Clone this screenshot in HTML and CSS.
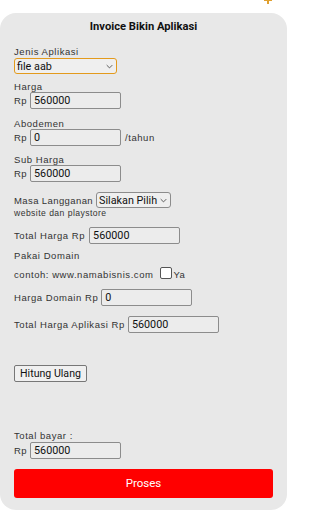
FILE: index.html
```html
<!DOCTYPE html>
<html>
<head>
<meta charset="utf-8">
<link rel="stylesheet" href="styles.css">
</head>
<body>
<div class="corner-icon"></div>
<div class="card">
  <h1 class="title">Invoice Bikin Aplikasi</h1>

  <div class="group g-jenis">
    <div class="label">Jenis Aplikasi</div>
    <div class="select focused sel-jenis"><span>file aab</span><svg class="chev" viewBox="0 0 10 6"><path d="M1 1l4 4 4-4" fill="none" stroke="#444" stroke-width="1.2"/></svg></div>
  </div>

  <div class="group g-harga">
    <div class="label">Harga</div>
    <div class="row"><span class="rp">Rp</span><div class="input">560000</div></div>
  </div>

  <div class="group g-abo">
    <div class="label">Abodemen</div>
    <div class="row"><span class="rp">Rp</span><div class="input">0</div><span class="unit">/tahun</span></div>
  </div>

  <div class="group g-sub">
    <div class="label">Sub Harga</div>
    <div class="row"><span class="rp">Rp</span><div class="input">560000</div></div>
  </div>

  <div class="group g-masa">
    <div class="row"><span class="label label-masa">Masa Langganan</span><div class="select sel-masa"><span>Silakan Pilih</span><svg class="chev" viewBox="0 0 10 6"><path d="M1 1l4 4 4-4" fill="none" stroke="#444" stroke-width="1.2"/></svg></div></div>
    <div class="note">website dan playstore</div>
  </div>

  <div class="group g-total">
    <div class="row"><span class="label">Total Harga Rp</span><div class="input">560000</div></div>
  </div>

  <div class="group g-domain">
    <div class="label">Pakai Domain</div>
    <div class="row row-check"><span class="label">contoh: www.namabisnis.com</span><span class="checkbox"></span><span class="label ya">Ya</span></div>
  </div>

  <div class="group g-hdomain">
    <div class="row"><span class="label">Harga Domain Rp</span><div class="input">0</div></div>
  </div>

  <div class="group g-tapl">
    <div class="row"><span class="label">Total Harga Aplikasi Rp</span><div class="input">560000</div></div>
  </div>

  <div class="group g-btn">
    <div class="btn">Hitung Ulang</div>
  </div>

  <div class="group g-bayar">
    <div class="label">Total bayar :</div>
    <div class="row"><span class="rp">Rp</span><div class="input">560000</div></div>
  </div>

  <div class="proses">Proses</div>
</div>
</body>
</html>
```
FILE: styles.css
```css
* { box-sizing: border-box; }
html, body { margin: 0; padding: 0; background: #ffffff; }
body {
  width: 288px;
  height: 512px;
  overflow: hidden;
  font-family: "Liberation Sans", Arial, sans-serif;
  color: #222;
  position: relative;
}
.corner-icon {
  position: absolute;
  right: 16px;
  top: -5px;
  width: 8px;
  height: 9px;
}
.corner-icon::before, .corner-icon::after {
  content: "";
  position: absolute;
  background: #e0a030;
}
.corner-icon::before { left: 3px; top: 0; width: 2px; height: 9px; }
.corner-icon::after { left: 0; top: 4px; width: 8px; height: 2px; }
.card {
  margin: 13px 1px 0 0;
  height: 497px;
  background: #e8e8e8;
  border-radius: 16px;
  padding: 7px 14px 0 14px;
}
.title {
  margin: 0;
  text-align: center;
  font-family: Roboto, "Noto Sans", sans-serif;
  font-weight: bold;
  font-size: 11.2px;
  line-height: 14px;
  color: #111;
}
.label {
  display: block;
  font-family: "Liberation Sans", Arial, sans-serif;
  font-size: 9.5px;
  letter-spacing: 0.55px;
  line-height: 11px;
  color: #333;
  white-space: nowrap;
}
.label-masa { letter-spacing: 0.4px; }
.row { display: flex; align-items: center; }
.rp {
  font-family: "Liberation Sans", Arial, sans-serif;
  font-size: 9.5px;
  letter-spacing: 0.4px;
  color: #333;
  width: 16px;
}
.input {
  width: 91px;
  height: 17px;
  border: 1px solid #8c8c8c;
  border-radius: 2px;
  background: #ececec;
  font-family: Roboto, sans-serif;
  font-size: 10.8px;
  line-height: 15px;
  padding-left: 3px;
  color: #111;
}
.unit {
  font-family: "Liberation Sans", Arial, sans-serif;
  font-size: 9.5px;
  letter-spacing: 0.55px;
  color: #333;
  margin-left: 4px;
}
.select {
  display: flex;
  align-items: center;
  justify-content: space-between;
  height: 16px;
  border: 1px solid #8c8c8c;
  border-radius: 3px;
  background: #efefef;
  font-family: Roboto, sans-serif;
  font-size: 10.8px;
  padding: 0 3px 0 2px;
  color: #111;
  white-space: nowrap;
}
.select.focused { border: 1.5px solid #e39a1c; }
.chev { width: 7px; height: 5px; flex: none; }
.g-jenis { margin-top: 12px; }
.sel-jenis { width: 103px; margin-top: 1px; }
.g-harga { margin-top: 7px; }
.g-abo { margin-top: 9px; }
.g-sub { margin-top: 8px; }
.g-masa { margin-top: 10px; }
.sel-masa { width: 75px; margin-left: 3px; }
.sel-masa .chev { margin-left: 2px; }
.note {
  font-family: "Liberation Sans", Arial, sans-serif;
  font-size: 8.6px;
  letter-spacing: 0.45px;
  color: #333;
  line-height: 10px;
}
.g-total { margin-top: 9px; }
.g-total .input { margin-left: 4px; }
.g-domain { margin-top: 6px; }
.row-check { margin-top: 7px; height: 12px; }
.checkbox {
  width: 12px;
  height: 12px;
  border: 1px solid #555;
  border-radius: 2px;
  background: #fff;
  margin-left: 7px;
  margin-top: -2px;
}
.ya { margin-left: 1px; }
.g-hdomain { margin-top: 9px; }
.g-hdomain .input { margin-left: 3px; }
.g-tapl { margin-top: 10px; }
.g-tapl .input { margin-left: 3px; }
.g-btn { margin-top: 30px; }
.btn {
  display: inline-block;
  height: 17px;
  width: 73px;
  border: 1px solid #777;
  border-radius: 2px;
  background: #f0f0f0;
  font-family: Roboto, sans-serif;
  font-size: 10.6px;
  line-height: 15px;
  text-align: center;
  color: #111;
}
.g-bayar { margin-top: 48px; }
.g-bayar .row { margin-top: 1px; }
.proses {
  margin-top: 10px;
  height: 29px;
  background: #ff0000;
  border-radius: 3px;
  color: #fff;
  font-family: Roboto, sans-serif;
  font-size: 11.5px;
  line-height: 29px;
  text-align: center;
}
```
